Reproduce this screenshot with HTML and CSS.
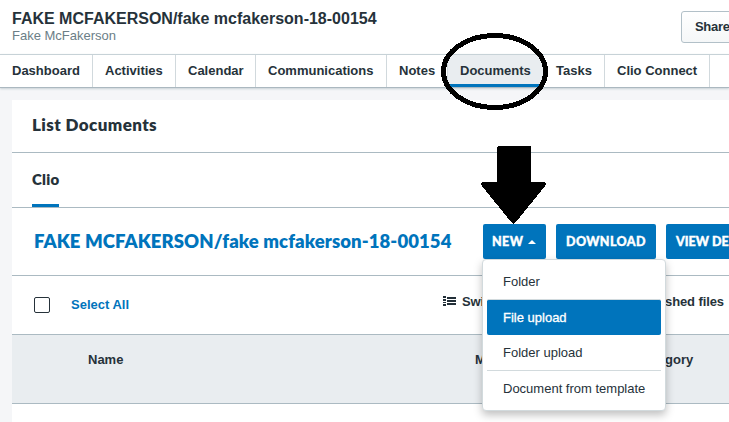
FILE: index.html
```html
<!DOCTYPE html>
<html lang="en">
<head>
<meta charset="utf-8">
<title>Documents</title>
<link rel="stylesheet" href="styles.css">
</head>
<body>
<header class="header">
  <div>
    <h1 class="matter"><span>FAKE MCFAKERSON/fake mcfakerson-18-00154</span></h1>
    <div class="client"><span>Fake McFakerson</span></div>
  </div>
  <div class="share"><span>Share</span></div>
</header>
<nav class="tabs">
  <a class="tab t-dashboard"><span>Dashboard</span></a>
  <a class="tab t-activities"><span>Activities</span></a>
  <a class="tab t-calendar"><span>Calendar</span></a>
  <a class="tab t-communications"><span>Communications</span></a>
  <a class="tab t-notes"><span>Notes</span></a>
  <a class="tab t-documents"><span>Documents</span></a>
  <a class="tab t-tasks"><span>Tasks</span></a>
  <a class="tab t-connect"><span>Clio Connect</span></a>
</nav>
<main class="card">
  <h2 class="card-title"><span>List Documents</span></h2>
  <div class="source"><a class="source-tab"><span>Clio</span></a></div>
  <div class="toolbar">
    <div class="folder"><span>FAKE MCFAKERSON/fake mcfakerson-18-00154</span></div>
    <div class="new-wrap">
      <button class="btn btn-new"><span>NEW</span><i class="caret"></i></button>
      <div class="menu">
        <a class="item"><span>Folder</span></a>
        <a class="item active"><span>File upload</span></a>
        <a class="item"><span>Folder upload</span></a>
        <a class="item last"><span>Document from template</span></a>
      </div>
    </div>
    <button class="btn btn-download"><span>DOWNLOAD</span></button>
    <button class="btn btn-view"><span>VIEW DE</span></button>
  </div>
  <div class="select-row">
    <i class="checkbox"></i>
    <a class="select-all"><span>Select All</span></a>
    <svg class="list-icon" viewBox="0 0 13 10" shape-rendering="crispEdges"><path d="M0 0h3v2H0zM0 3h3v2H0zM0 6h3v1H0zM0 8h3v2H0zM4 1h9v2H4zM4 4h9v2H4zM4 7h9v2H4z" fill="#222f38"/></svg>
    <span class="switch">Swi</span>
    <span class="files">shed files</span>
  </div>
  <div class="thead">
    <span class="th-name">Name</span>
    <span class="th-mod">M</span>
    <span class="th-cat">gory</span>
  </div>
</main>
<svg class="marks" viewBox="0 0 729 422" shape-rendering="crispEdges">
  <ellipse cx="494.500" cy="71.500" rx="51" ry="36" fill="none" stroke="#000" stroke-width="5"/>
  <path d="M498 146h31q2 0 2 2v34h13q3 1 1 4l-29 36q-2.500 3-5 0l-29-36q-2-3 1-4h14v-34q0-2 2-2z"/>
</svg>
</body>
</html>
```
FILE: styles.css
```css
* { box-sizing: border-box; }
body {
  margin: 0;
  width: 729px;
  height: 422px;
  overflow: hidden;
  position: relative;
  background: #f5f6f8;
  color: #26323a;
  font: bold 13px/16px "Liberation Sans", sans-serif;
}
h1, h2 { margin: 0; }
.header {
  height: 54px;
  padding: 10px 0 0 12px;
  display: flex;
  justify-content: space-between;
  background: #fff;
}
.matter { font-size: 16px; line-height: 18px; white-space: nowrap; }
.client { font-weight: normal; line-height: 16px; color: #6b7e87; }
.share {
  width: 60px;
  height: 32px;
  margin: 1px -12px 0 0;
  padding: 7px 0 0 13px;
  border: 1px solid #b2c0c8;
  border-radius: 3px;
  background: linear-gradient(#fff, #f5f7f8);
  letter-spacing: -.3px;
}
.tabs {
  height: 34px;
  display: flex;
  background: #fff;
  border-top: 1px solid #c7d2d7;
  border-bottom: 1px solid #abb8c0;
  box-shadow: 0 1px 2px #c8d0d5;
}
.tab {
  border-right: 1px solid #d1d9dd;
  padding: 8px 0 0 12px;
  white-space: nowrap;
}
.t-dashboard { width: 93px; }
.t-activities { width: 83px; }
.t-calendar { width: 80px; }
.t-communications { width: 131px; }
.t-notes { width: 61px; }
.t-documents { width: 96px; background: #e9edf0; border-bottom: 3px solid #0074bc; }
.t-tasks { width: 61px; }
.t-connect { width: 105px; }
.card { margin: 12px 0 0 12px; height: 322px; background: #fff; }
.card-title {
  height: 53px;
  padding: 14px 0 0 20px;
  font: 800 17px/22px Lato, sans-serif;
  letter-spacing: .4px;
  border-bottom: 1px solid #abbac2;
}
.source { height: 55px; padding-left: 20px; border-bottom: 1px solid #abbac2; }
.source-tab {
  display: block;
  width: 27px;
  height: 54px;
  padding-top: 16px;
  font: 800 15px/20px Lato, sans-serif;
  letter-spacing: .25px;
  border-bottom: 3px solid #0074bc;
}
.toolbar {
  height: 68px;
  padding: 16px 0 0 22px;
  display: flex;
  border-bottom: 1px solid #abbac2;
}
.folder {
  width: 449px;
  padding-top: 5px;
  font: 800 18.5px/24px Lato, sans-serif;
  letter-spacing: .09px;
  white-space: nowrap;
  color: #0074bc;
}
.new-wrap { position: relative; margin-right: 10px; }
.btn {
  height: 35px;
  padding: 1px 0 0 9px;
  display: flex;
  align-items: center;
  border: 0;
  border-radius: 2px;
  background: #0074bc;
  color: #fff;
  font: 900 12.5px/20px Lato, sans-serif;
  letter-spacing: .4px;
  -webkit-text-stroke: .4px #fff;
  white-space: nowrap;
}
.btn-new { width: 63px; }
.btn-download { width: 100px; padding-left: 10px; margin-right: 10px; }
.btn-view { width: 63px; padding-left: 10px; border-radius: 2px 0 0 2px; letter-spacing: 0; }
.caret {
  margin-left: 5px;
  border: 4px solid transparent;
  border-top: 0;
  border-bottom-color: #fff;
}
.menu {
  position: absolute;
  z-index: 2;
  left: -1px;
  top: 35px;
  width: 184px;
  height: 152px;
  padding: 4px;
  background: #fff;
  border: 1px solid #d2dadd;
  border-radius: 4px;
  box-shadow: 0 4px 9px rgba(0,0,0,.25);
  font-weight: normal;
}
.item { display: block; height: 35px; padding: 10px 0 0 16px; white-space: nowrap; }
.item.active {
  height: 36px;
  border-top: 1px solid #d2dadd;
  background: #0074bc;
  color: #fff;
  -webkit-text-stroke: .3px #fff;
  border-radius: 2px;
}
.item.last { height: 36px; border-top: 1px solid #d2dadd; }
.select-row {
  height: 59px;
  display: grid;
  grid-template-columns: 37px 372px 19px 203px 1fr;
  padding-left: 22px;
  border-bottom: 1px solid #abbac2;
}
.checkbox { width: 16px; height: 16px; margin-top: 21px; border: 1px solid #26323a; border-radius: 2px; }
.select-all { color: #0074bc; padding-top: 21px; }
.list-icon { width: 13px; height: 10px; margin-top: 20px; }
.switch, .files { padding-top: 18px; white-space: nowrap; letter-spacing: -.1px; }
.thead {
  height: 69px;
  display: grid;
  grid-template-columns: 387px 190px 1fr;
  padding: 17px 0 0 76px;
  background: #e9edf0;
  border-bottom: 1px solid #abbac2;
}
.marks { position: absolute; z-index: 3; left: 0; top: 0; width: 729px; height: 422px; pointer-events: none; }
```
